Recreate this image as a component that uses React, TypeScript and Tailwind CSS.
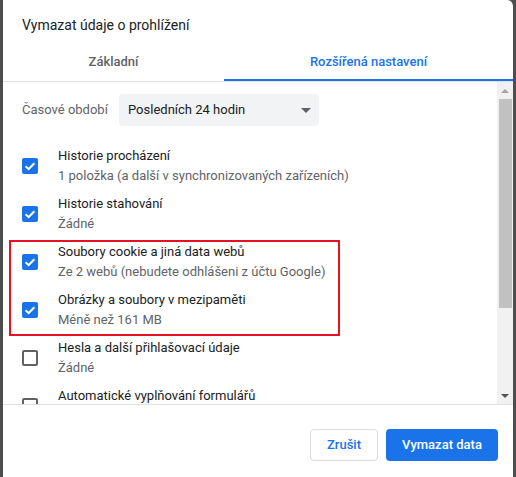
import React from 'react';

type Item = { title: string; sub: string; checked: boolean };

const items: Item[] = [
  { title: 'Historie procházení', sub: '1 položka (a další v synchronizovaných zařízeních)', checked: true },
  { title: 'Historie stahování', sub: 'Žádné', checked: true },
  { title: 'Soubory cookie a jiná data webů', sub: 'Ze 2 webů (nebudete odhlášeni z účtu Google)', checked: true },
  { title: 'Obrázky a soubory v mezipaměti', sub: 'Méně než 161 MB', checked: true },
  { title: 'Hesla a další přihlašovací údaje', sub: 'Žádné', checked: false },
  { title: 'Automatické vyplňování formulářů', sub: 'Žádné', checked: false },
];

function Checkbox({ checked }: { checked: boolean }) {
  if (checked) {
    return (
      <div className="w-4 h-4 shrink-0 rounded-[2px] bg-[#1a73e8] flex items-center justify-center">
        <svg width="16" height="16" viewBox="0 0 16 16">
          <path d="M3.6 8.3 L6.6 11.1 L12.4 5.2" fill="none" stroke="white" strokeWidth="2" />
        </svg>
      </div>
    );
  }
  return <div className="w-4 h-4 shrink-0 rounded-[2px] border-2 border-[#5f6368]" />;
}

function Row({ item }: { item: Item }) {
  return (
    <div className="flex items-center gap-5 h-10">
      <Checkbox checked={item.checked} />
      <div className="text-[13px] leading-5">
        <div className="text-[#202124]">{item.title}</div>
        <div className="text-[#5f6368]">{item.sub}</div>
      </div>
    </div>
  );
}

export default function App() {
  return (
    <div className="w-[516px] h-[477px] bg-[#4d4d4d] overflow-hidden font-['Roboto',sans-serif]">
      <div className="ml-[3px] w-[510px] h-full bg-white rounded-tr-[6px] flex flex-col">
        <div className="h-[43px] pl-[19px] pt-[15px] text-[14px] leading-5 text-[#202124]">
          Vymazat údaje o prohlížení
        </div>

        {/* tabs */}
        <div className="h-[39px] flex border-b border-[#e0e0e0] text-[13px] font-medium">
          <div className="w-[221px] flex items-center justify-center text-[#5f6368]">Základní</div>
          <div className="flex-1 relative flex items-center justify-center text-[#1a73e8]">
            Rozšířená nastavení
            <div className="absolute left-0 right-0 bottom-0 h-[2px] bg-[#1a73e8]" />
          </div>
        </div>

        {/* scroll area */}
        <div className="h-[323px] flex border-b border-[#e0e0e0] overflow-hidden">
          <div className="flex-1 pl-[19px] pt-3 flex flex-col">
            <div className="flex items-center">
              <div className="w-[97px] text-[13px] text-[#5f6368]">Časové období</div>
              <div className="w-[200px] h-8 rounded bg-[#f1f3f4] flex items-center justify-between pl-[9px] pr-[8px] text-[13px] text-[#202124]">
                <span>Posledních 24 hodin</span>
                <svg width="10" height="5" viewBox="0 0 10 5">
                  <path d="M0 0 L10 0 L5 5 Z" fill="#5f6368" />
                </svg>
              </div>
            </div>
            <div className="mt-5 flex flex-col gap-2">
              <Row item={items[0]} />
              <Row item={items[1]} />
              <div className="relative flex flex-col gap-2">
                <div className="absolute left-[-13px] top-[-2px] w-[331px] h-[96px] border-2 border-[#e81123]" />
                <Row item={items[2]} />
                <Row item={items[3]} />
              </div>
              <Row item={items[4]} />
              <Row item={items[5]} />
            </div>
          </div>

          {/* scrollbar */}
          <div className="w-4 bg-[#f1f1f1] flex flex-col items-center">
            <div className="h-[17px] flex items-center justify-center">
              <svg width="8" height="4" viewBox="0 0 8 4">
                <path d="M0 4 L8 4 L4 0 Z" fill="#a3a3a3" />
              </svg>
            </div>
            <div className="w-[13px] h-[209px] bg-[#c1c1c1]" />
            <div className="flex-1" />
            <div className="h-[17px] flex items-center justify-center">
              <svg width="8" height="4" viewBox="0 0 8 4">
                <path d="M0 0 L8 0 L4 4 Z" fill="#505050" />
              </svg>
            </div>
          </div>
        </div>

        {/* footer */}
        <div className="flex justify-end gap-2 pt-6 pr-[15px]">
          <button className="w-[68px] h-8 rounded border border-[#dadce0] bg-white text-[13px] font-medium text-[#1a73e8]">
            Zrušit
          </button>
          <button className="w-[112px] h-8 rounded bg-[#1a73e8] text-[13px] font-medium text-white">
            Vymazat data
          </button>
        </div>
      </div>
    </div>
  );
}
